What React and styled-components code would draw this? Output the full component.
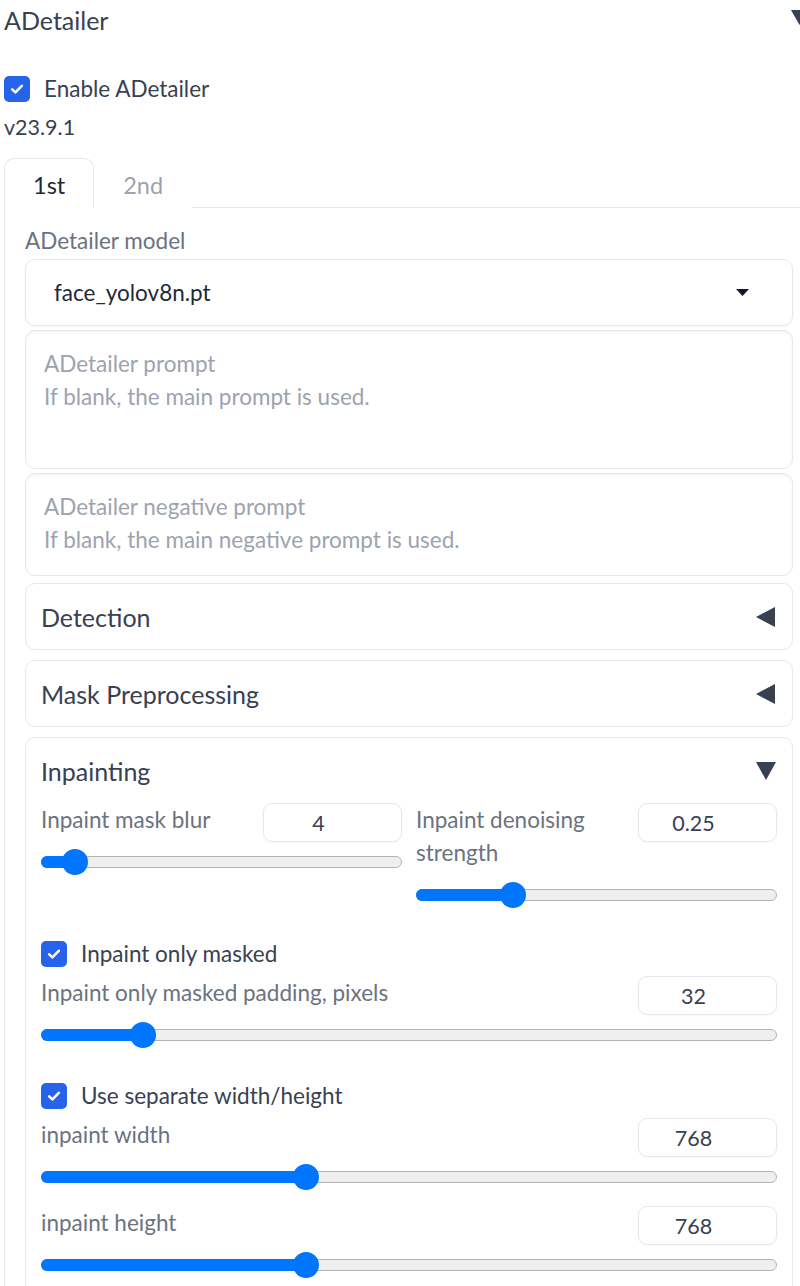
import React from "react";
import styled, { createGlobalStyle } from "styled-components";

const GlobalStyle = createGlobalStyle`
  html, body {
    margin: 0;
    padding: 0;
    background: #ffffff;
    overflow: hidden;
  }
  body {
    font-family: Lato, "Noto Sans", sans-serif;
    color: #374151;
  }
`;

const Page = styled.div`
  width: 810px;
  padding-left: 4px;
`;

const Header = styled.div`
  display: flex;
  justify-content: space-between;
  align-items: center;
  height: 40px;
  padding-right: 6px;
  font-size: 25px;
  color: #374151;
`;

const HeaderArrow = styled.svg`
  align-self: flex-start;
  margin-top: 10px;
`;

const CheckRow = styled.label`
  display: flex;
  align-items: center;
  gap: 14px;
  height: 33px;
  margin-top: ${(p) => p.$top || 0}px;
  font-size: 22.5px;
  color: #374151;
`;

const Box = styled.span`
  display: flex;
  align-items: center;
  justify-content: center;
  width: 26px;
  height: 26px;
  border-radius: 5px;
  background: #2563eb;
  flex-shrink: 0;
`;

const Version = styled.div`
  margin-top: 7px;
  height: 30px;
  line-height: 30px;
  font-size: 21.5px;
  color: #374151;
`;

const TabBar = styled.div`
  display: flex;
  height: 50px;
  margin-top: 16px;
  border-bottom: 1px solid #e5e7eb;
  box-sizing: border-box;
`;

const Tab = styled.div`
  display: flex;
  align-items: center;
  padding: 2px 28px 0;
  font-size: 23.5px;
  color: ${(p) => (p.$active ? "#1f2937" : "#9ca3af")};
  background: #ffffff;
  border: 1px solid ${(p) => (p.$active ? "#e5e7eb" : "transparent")};
  border-bottom: none;
  border-radius: 10px 10px 0 0;
  margin-bottom: -1px;
  height: 50px;
  box-sizing: border-box;
`;

const Panel = styled.div`
  border-left: 1px solid #e5e7eb;
  border-right: 1px solid #e5e7eb;
  padding: 21px 20px 20px;
  display: flex;
  flex-direction: column;
`;

const FieldLabel = styled.div`
  font-size: 22.5px;
  line-height: 24px;
  color: #6b7280;
  margin-bottom: 6px;
`;

const Dropdown = styled.div`
  display: flex;
  align-items: center;
  justify-content: space-between;
  height: 67px;
  box-sizing: border-box;
  padding: 0 43px 0 28px;
  border: 1px solid #e5e7eb;
  border-radius: 10px;
  font-size: 22.5px;
  color: #1f2937;
  box-shadow: 0 1px 2px rgba(0, 0, 0, 0.04);
`;

const Prompt = styled.textarea`
  display: block;
  width: 100%;
  height: ${(p) => p.$height}px;
  margin-top: 4px;
  box-sizing: border-box;
  padding: 16px 18px;
  border: 1px solid #e5e7eb;
  border-radius: 10px;
  resize: none;
  outline: none;
  font-family: Lato, "Noto Sans", sans-serif;
  font-size: 22.5px;
  line-height: 33px;
  color: #1f2937;
  box-shadow: inset 0 2px 3px rgba(0, 0, 0, 0.04);
  &::placeholder {
    color: #9ca3af;
  }
`;

const Accordion = styled.div`
  border: 1px solid #e5e7eb;
  border-radius: 10px;
  margin-top: ${(p) => p.$top}px;
`;

const AccordionHead = styled.div`
  display: flex;
  justify-content: space-between;
  align-items: center;
  height: 65px;
  padding: 0 16px 0 15px;
  font-size: 25px;
  color: #374151;
`;

const AccordionBody = styled.div`
  display: flex;
  flex-direction: column;
  gap: 6px;
  padding: 0 15px 16px;
`;

const Columns = styled.div`
  display: grid;
  grid-template-columns: 1fr 1fr;
  gap: 14px;
  margin-bottom: 16px;
`;

const Field = styled.div`
  display: flex;
  flex-direction: column;
  margin-top: ${(p) => p.$top || 0}px;
`;

const FieldHead = styled.div`
  display: flex;
  justify-content: space-between;
  align-items: flex-start;
  gap: 12px;
`;

const SliderLabel = styled.div`
  flex: 1;
  font-size: 22.5px;
  line-height: 33px;
  padding-bottom: 6px;
  color: #6b7280;
`;

const NumberBox = styled.div`
  width: 139px;
  height: 39px;
  box-sizing: border-box;
  flex-shrink: 0;
  display: flex;
  align-items: center;
  justify-content: center;
  padding-right: 28px;
  border: 1px solid #e5e7eb;
  border-radius: 9px;
  font-size: 21.5px;
  color: #374151;
  box-shadow: 0 1px 2px rgba(0, 0, 0, 0.03);
`;

const SliderWrap = styled.div`
  position: relative;
  height: 40px;
  display: flex;
  align-items: center;
`;

const Track = styled.div`
  width: 100%;
  height: 12px;
  box-sizing: border-box;
  border: 1.5px solid #b4b4b4;
  border-radius: 6px;
  background: #efefef;
`;

const Fill = styled.div`
  position: absolute;
  left: 0;
  top: 14px;
  height: 12px;
  border-radius: 6px;
  background: #0075ff;
`;

const Thumb = styled.div`
  position: absolute;
  top: 7px;
  width: 26px;
  height: 26px;
  margin-left: -13px;
  border-radius: 50%;
  background: #0075ff;
`;

const Caret = () => (
  <svg width="13" height="7" viewBox="0 0 13 7">
    <path d="M0 0 H13 L6.5 7 Z" fill="#111827" />
  </svg>
);

const LeftArrow = () => (
  <svg width="20" height="20" viewBox="0 0 20 20">
    <path d="M0 10 L19 0 V20 Z" fill="#374151" />
  </svg>
);

const DownArrow = () => (
  <svg width="20" height="18" viewBox="0 0 20 18">
    <path d="M0 0 H20 L10 18 Z" fill="#374151" />
  </svg>
);

const Check = ({ children, top }) => (
  <CheckRow $top={top}>
    <Box>
      <svg width="16" height="16" viewBox="0 0 16 16">
        <path
          d="M3.2 8.4 L6.4 11.4 L12.8 4.8"
          fill="none"
          stroke="#ffffff"
          strokeWidth="2.6"
          strokeLinecap="round"
          strokeLinejoin="round"
        />
      </svg>
    </Box>
    {children}
  </CheckRow>
);

const Slider = ({ label, value, min, max, top }) => {
  const p = (parseFloat(value) - min) / (max - min);
  const pos = `calc(13px + (100% - 26px) * ${p})`;
  return (
    <Field $top={top}>
      <FieldHead>
        <SliderLabel>{label}</SliderLabel>
        <NumberBox>{value}</NumberBox>
      </FieldHead>
      <SliderWrap>
        <Track />
        <Fill style={{ width: pos }} />
        <Thumb style={{ left: pos }} />
      </SliderWrap>
    </Field>
  );
};

const App = () => {
  return (
    <Page>
      <GlobalStyle />
      <Header>
        <span>ADetailer</span>
        <HeaderArrow width="17" height="15" viewBox="0 0 17 15">
          <path d="M0 0 H17 L8.5 15 Z" fill="#374151" />
        </HeaderArrow>
      </Header>

      <Check top={32}>Enable ADetailer</Check>
      <Version>v23.9.1</Version>

      <TabBar>
        <Tab $active>1st</Tab>
        <Tab>2nd</Tab>
      </TabBar>

      <Panel>
        <FieldLabel>ADetailer model</FieldLabel>
        <Dropdown>
          <span>face_yolov8n.pt</span>
          <Caret />
        </Dropdown>
        <Prompt
          $height={139}
          placeholder={"ADetailer prompt\nIf blank, the main prompt is used."}
        />
        <Prompt
          $height={103}
          placeholder={
            "ADetailer negative prompt\nIf blank, the main negative prompt is used."
          }
        />

        <Accordion $top={7}>
          <AccordionHead>
            <span>Detection</span>
            <LeftArrow />
          </AccordionHead>
        </Accordion>

        <Accordion $top={10}>
          <AccordionHead>
            <span>Mask Preprocessing</span>
            <LeftArrow />
          </AccordionHead>
        </Accordion>

        <Accordion $top={10}>
          <AccordionHead>
            <span>Inpainting</span>
            <DownArrow />
          </AccordionHead>
          <AccordionBody>
            <Columns>
              <Slider label="Inpaint mask blur" value="4" min={0} max={64} />
              <Slider
                label="Inpaint denoising strength"
                value="0.25"
                min={0}
                max={1}
              />
            </Columns>
            <Check>Inpaint only masked</Check>
            <Slider
              label="Inpaint only masked padding, pixels"
              value="32"
              min={0}
              max={256}
            />
            <Check top={18}>Use separate width/height</Check>
            <Slider label="inpaint width" value="768" min={64} max={2048} />
            <Slider
              label="inpaint height"
              value="768"
              min={64}
              max={2048}
              top={3}
            />
          </AccordionBody>
        </Accordion>
      </Panel>
    </Page>
  );
};

export default App;
